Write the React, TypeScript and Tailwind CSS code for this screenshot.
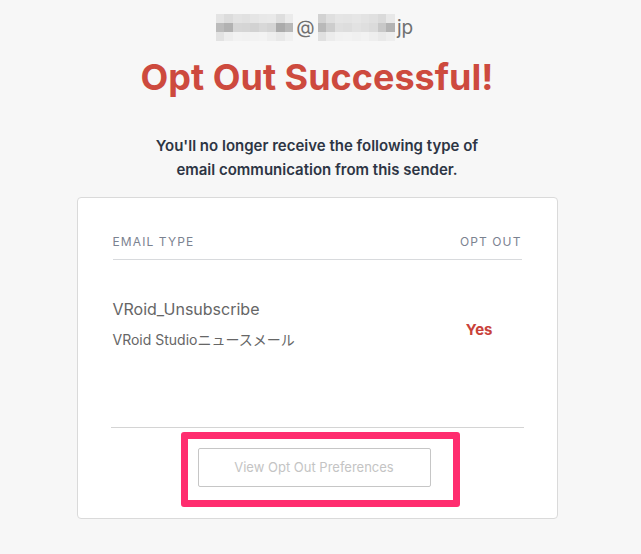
import React from "react";

// pixelated (mosaic) cells hiding the email address
const leftBlock = [
  ["#e4e4e4", "#dcdcdc", "#e3e3e3", "#e1e1e1", "#e5e5e5", "#e8e8e8", "#e9e9e9", "#dedede", "#ebebeb"],
  ["#bcbcbc", "#b2b2b2", "#d6d6d6", "#d5d5d5", "#d2d2d2", "#d8d8d8", "#d4d4d4", "#ababab", "#b8b8b8"],
  ["#e2e2e2", "#ededed", "#f2f2f2", "#f1f1f1", "#f2f2f2", "#f3f3f3", "#eeeeee", "#e8e8e8", "#f0f0f0"],
];

const rightBlock = [
  ["#d2d2d2", "#dfdfdf", "#e5e5e5", "#e4e4e4", "#e6e6e6", "#e3e3e3", "#e0e0e0", "#dadada", "#e8e8e8"],
  ["#b9b9b9", "#cdcdcd", "#dfdfdf", "#dddddd", "#e2e2e2", "#dfdfdf", "#dbdbdb", "#c8c8c8", "#b3b3b3"],
  ["#e0e0e0", "#ececec", "#f1f1f1", "#f2f2f2", "#f0f0f0", "#f2f2f2", "#eeeeee", "#e9e9e9", "#eeeeee"],
];

const Mosaic: React.FC<{ cells: string[][] }> = ({ cells }) => (
  <div className="flex flex-col">
    {cells.map((row, i) => (
      <div key={i} className="flex">
        {row.map((c, j) => (
          <div key={j} className="w-[8.6px] h-[9px]" style={{ backgroundColor: c }} />
        ))}
      </div>
    ))}
  </div>
);

export default function App() {
  return (
    <div
      className="min-h-[554px] bg-[#f7f7f7] pt-[14px] pr-[7px] text-center"
      style={{ fontFamily: "Inter, 'Noto Sans CJK JP', sans-serif" }}
    >
      {/* blurred email */}
      <div className="mr-[5px] flex h-[27px] items-center justify-center text-[19px] text-[#707070]">
        <Mosaic cells={leftBlock} />
        <span className="mx-[3px] leading-none">@</span>
        <Mosaic cells={rightBlock} />
        <span className="ml-[2px] leading-none">jp</span>
      </div>

      <h1 className="mt-[16px] text-[36px] font-bold leading-[40px] text-[#cd4a3e]">
        Opt Out Successful!
      </h1>

      <p className="mt-[37px] text-[15px] font-semibold leading-[23.5px] text-[#2d3544]">
        You'll no longer receive the following type of
        <br />
        email communication from this sender.
      </p>

      <div className="mx-auto mt-[16px] w-[481px] rounded-[4px] border border-[#dadada] bg-white text-left">
        <div className="px-[35px]">
          <div className="flex justify-between border-b border-[#d8dadd] pt-[36px] pb-[9px] text-[12px] leading-[16px] tracking-[1.1px] text-[#7b8290]">
            <span>EMAIL TYPE</span>
            <span>OPT OUT</span>
          </div>
          <div className="flex h-[167px] items-start justify-between pt-[38px]">
            <div>
              <div className="text-[16px] leading-[22px] text-[#666666]">VRoid_Unsubscribe</div>
              <div className="mt-[10px] text-[14px] leading-[19px] text-[#666666]">
                VRoid Studioニュースメール
              </div>
            </div>
            <div className="mt-[23px] pr-[29px] text-[15px] font-bold leading-[18px] text-[#c9423a]">
              Yes
            </div>
          </div>
        </div>
        <div className="mx-[33px] flex justify-center border-t border-[#d4d4d4] pt-[20px] pb-[31px]">
          <div className="relative mr-[6px]">
            <button className="h-[39px] w-[233px] rounded-[2px] border-[1.5px] border-[#c6c6c6] bg-white text-[13px] text-[#c4c4c4]">
              View Opt Out Preferences
            </button>
            <div className="pointer-events-none absolute -top-[16px] -left-[17px] -right-[29px] -bottom-[20px] rounded-[3px] border-[7px] border-[#ff2d6f]" />
          </div>
        </div>
      </div>
    </div>
  );
}
